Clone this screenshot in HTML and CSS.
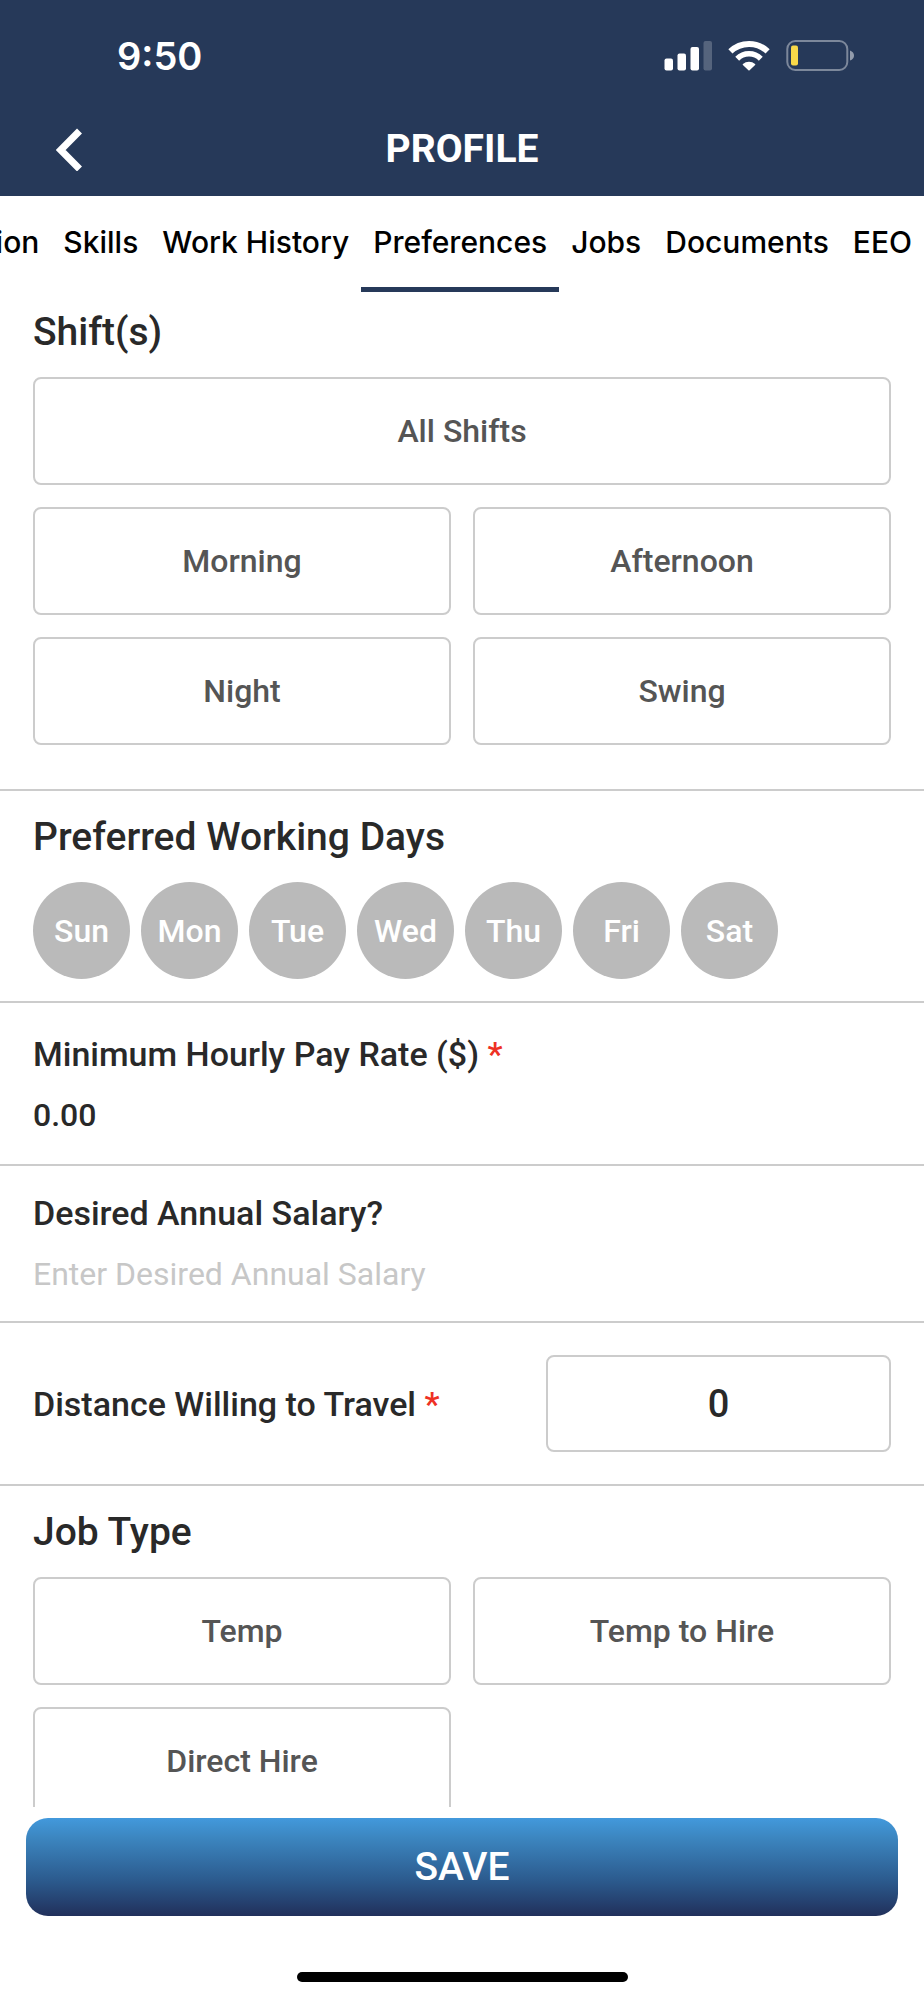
FILE: index.html
```html
<!DOCTYPE html>
<html lang="en">
<head>
	<meta charset="utf-8">
	<title>Profile - Preferences</title>
	<meta name="viewport" content="width=device-width, initial-scale=1">
	<link rel="stylesheet" href="styles.css">
</head>
<body>
<header class="header">
	<div class="status_bar">
		<span class="clock">9:50</span>
		<div class="status_icons">
			<svg width="48" height="32" viewBox="0 0 48 32" fill="#fff" aria-hidden="true">
				<rect x="0.5" y="18.5" width="8.5" height="12" rx="2"/>
				<rect x="13.5" y="13.5" width="8.5" height="17" rx="2"/>
				<rect x="26.5" y="7" width="8.5" height="23.5" rx="2"/>
				<rect x="39.5" y="1" width="8.5" height="29.5" rx="2" opacity="0.22"/>
			</svg>
			<svg width="42" height="32" viewBox="0 0 42 32" fill="none" stroke="#fff" stroke-width="6" aria-hidden="true">
				<path d="M2.4 11.4a27 27 0 0 1 37.2 0"/>
				<path stroke-width="5.5" d="M9.2 18.7a16.7 16.7 0 0 1 23.6 0"/>
				<path fill="#fff" stroke="none" d="M14.9 23.9a9.4 9.4 0 0 1 12.2 0q.5.5 0 1l-5.5 5.3q-.6.6-1.2 0l-5.5-5.3q-.5-.5 0-1z"/>
			</svg>
			<svg width="68" height="32" viewBox="0 0 68 32" aria-hidden="true">
				<rect x="1.3" y="1" width="60" height="29" rx="8" fill="none" stroke="#fff" stroke-opacity="0.4" stroke-width="2"/>
				<rect x="5" y="5.5" width="7" height="20" rx="2" fill="#f9d949"/>
				<path d="M64 10.5q4 1.5 4 5t-4 5z" fill="#fff" fill-opacity="0.5"/>
			</svg>
		</div>
	</div>
	<div class="title_bar">
		<button class="back" type="button" aria-label="Back">
			<svg width="26" height="44" viewBox="0 0 26 44" fill="none" stroke="#fff" stroke-width="7" aria-hidden="true">
				<path d="M23.5 4L4.7 23l18.8 19"/>
			</svg>
		</button>
		<h1 class="title">PROFILE</h1>
	</div>
</header>

<nav class="tabs">
	<a class="tab" href="#">Education</a>
	<a class="tab" href="#">Skills</a>
	<a class="tab" href="#">Work History</a>
	<a class="tab active" href="#" aria-current="page">Preferences</a>
	<a class="tab" href="#">Jobs</a>
	<a class="tab" href="#">Documents</a>
	<a class="tab" href="#">EEO</a>
</nav>

<form class="preferences" id="preferences">
	<section class="section shifts">
		<h2 class="heading">Shift(s)</h2>
		<div class="options">
			<button class="option wide" type="button">All Shifts</button>
			<button class="option" type="button">Morning</button>
			<button class="option" type="button">Afternoon</button>
			<button class="option" type="button">Night</button>
			<button class="option" type="button">Swing</button>
		</div>
	</section>

	<section class="section">
		<h2 class="heading">Preferred Working Days</h2>
		<div class="days">
			<button class="day" type="button">Sun</button>
			<button class="day" type="button">Mon</button>
			<button class="day" type="button">Tue</button>
			<button class="day" type="button">Wed</button>
			<button class="day" type="button">Thu</button>
			<button class="day" type="button">Fri</button>
			<button class="day" type="button">Sat</button>
		</div>
	</section>

	<section class="section field pay">
		<label class="label" for="pay_rate">Minimum Hourly Pay Rate ($) <span class="required">*</span></label>
		<input class="input" id="pay_rate" type="text" value="0.00">
	</section>

	<section class="section field salary">
		<label class="label" for="salary">Desired Annual Salary?</label>
		<input class="input" id="salary" type="text" placeholder="Enter Desired Annual Salary">
	</section>

	<section class="section distance">
		<label class="label" for="distance">Distance Willing to Travel <span class="required">*</span></label>
		<input class="distance_input" id="distance" type="text" value="0">
	</section>

	<section class="section">
		<h2 class="heading">Job Type</h2>
		<div class="options">
			<button class="option" type="button">Temp</button>
			<button class="option" type="button">Temp to Hire</button>
			<button class="option" type="button">Direct Hire</button>
		</div>
	</section>
</form>

<footer class="footer">
	<button class="save" type="submit" form="preferences">SAVE</button>
	<div class="home_indicator"></div>
</footer>
</body>
</html>
```
FILE: styles.css
```css
* {
	box-sizing: border-box;
}

body {
	margin: 0;
	height: 100vh;
	display: flex;
	flex-direction: column;
	background: #fff;
	color: #292929;
	font-family: Roboto, "Liberation Sans", sans-serif;
	font-weight: 500;
}

button, input {
	margin: 0;
	padding: 0;
	border: 0;
	background: none;
	color: inherit;
	font: inherit;
}

/* header */
.header {
	flex: none;
	background: #263959;
	color: #fff;
}

.status_bar {
	display: flex;
	justify-content: space-between;
	align-items: center;
	height: 101px;
	padding: 10px 70px 0 117px;
}

.clock {
	font-family: Inter, sans-serif;
	font-size: 38px;
	line-height: 46px;
	font-weight: 600;
}

.status_icons {
	display: flex;
	gap: 16px;
}

.title_bar {
	display: grid;
	grid-template-columns: 1fr auto 1fr;
	align-items: center;
	height: 95px;
	padding: 0 56px;
}

.back {
	display: flex;
	justify-self: start;
}

.title {
	margin: 0;
	font-size: 39px;
	line-height: 46px;
	font-weight: 700;
}

/* tabs, scrolled to the right end */
.tabs {
	flex: none;
	display: flex;
	justify-content: flex-end;
	overflow: hidden;
	height: 96px;
}

.tab {
	padding: 26px 12px 0;
	border-bottom: 5px solid transparent;
	color: #000;
	font-family: Inter, sans-serif;
	font-size: 30px;
	line-height: 40px;
	text-decoration: none;
	white-space: nowrap;
}

.tab.active {
	border-color: #263959;
}

/* form */
.preferences {
	flex: 1;
	min-height: 0;
	overflow: hidden;
}

.section {
	padding: 23px 33px 22px;
	border-bottom: 2px solid #ccc;
}

.shifts {
	padding-top: 17px;
	padding-bottom: 44px;
}

.heading {
	margin: 0 0 22px;
	font-size: 39px;
	line-height: 46px;
	font-weight: 500;
}

.options {
	display: grid;
	grid-template-columns: 1fr 1fr;
	gap: 22px;
}

.option {
	height: 108px;
	border: 2px solid #ccc;
	border-radius: 8px;
	color: #555;
	font-size: 32px;
}

.option.wide {
	grid-column: 1 / -1;
}

.days {
	display: flex;
	gap: 11px;
}

.day {
	width: 97px;
	height: 97px;
	border-radius: 50%;
	background: #bababa;
	color: #fff;
	font-size: 32px;
}

.field {
	display: flex;
	flex-direction: column;
	gap: 21px;
}

.pay {
	padding-top: 31px;
	padding-bottom: 29px;
}

.salary {
	padding-top: 27px;
	padding-bottom: 27px;
}

.label {
	font-size: 34px;
	line-height: 40px;
}

.required {
	color: #ee3124;
}

.input {
	width: 100%;
	height: 40px;
	font-size: 32px;
}

.input::placeholder {
	color: #c7c7c7;
	font-weight: 400;
}

.distance {
	display: flex;
	justify-content: space-between;
	align-items: center;
	padding-top: 32px;
	padding-bottom: 32px;
}

.distance_input {
	width: 345px;
	height: 97px;
	border: 2px solid #ccc;
	border-radius: 8px;
	font-size: 38px;
	text-align: center;
}

/* footer */
.footer {
	flex: none;
	display: flex;
	flex-direction: column;
	align-items: center;
	gap: 56px;
	padding: 11px 26px 18px;
}

.save {
	width: 100%;
	height: 98px;
	border-radius: 22px;
	background: linear-gradient(to bottom, #4299dc 0%, #3c86c0 20%, #2b598c 65%, #21305b 100%);
	color: #fff;
	font-size: 39px;
}

.home_indicator {
	width: 331px;
	height: 10px;
	border-radius: 5px;
	background: #000;
}
```
